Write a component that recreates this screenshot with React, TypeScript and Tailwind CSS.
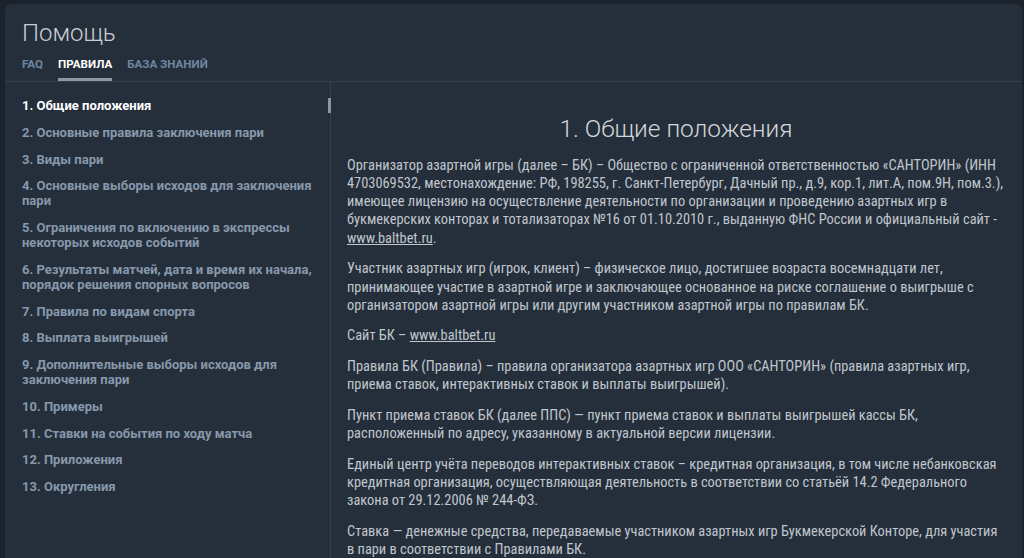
import React from "react";

const navItems = [
  "1. Общие положения",
  "2. Основные правила заключения пари",
  "3. Виды пари",
  "4. Основные выборы исходов для заключения пари",
  "5. Ограничения по включению в экспрессы некоторых исходов событий",
  "6. Результаты матчей, дата и время их начала, порядок решения спорных вопросов",
  "7. Правила по видам спорта",
  "8. Выплата выигрышей",
  "9. Дополнительные выборы исходов для заключения пари",
  "10. Примеры",
  "11. Ставки на события по ходу матча",
  "12. Приложения",
  "13. Округления",
];

export default function App() {
  return (
    <div className="h-[558px] overflow-hidden bg-[#1c222b] pl-[5px] pr-[2px] pt-[4px] font-['Roboto',sans-serif]">
      <div className="h-full rounded-t-[6px] bg-[#252f3b] flex flex-col">
        {/* Header */}
        <div className="border-b border-[#34404d] px-[17px] pt-[15px]">
          <h1 className="text-[24px] leading-[28px] font-light text-[#c9ced4]">Помощь</h1>
          <div className="mt-[11px] flex gap-[15px] text-[11.6px] font-bold uppercase leading-[13px]">
            <span className="pb-[10px] text-[#6e86a2]">FAQ</span>
            <span className="border-b-[3px] border-[#8a97a6] pb-[7px] text-white">Правила</span>
            <span className="pb-[10px] text-[#6e86a2]">База знаний</span>
          </div>
        </div>

        <div className="flex flex-1 min-h-0">
          {/* Nav */}
          <div className="relative w-[326px] shrink-0 border-r border-[#34404d] pl-[17px] pr-[16px] pt-[16px]">
            <ul className="flex flex-col gap-[11.75px]">
              {navItems.map((t, i) => (
                <li
                  key={t}
                  className={`text-[13px] font-bold leading-[15px] ${i === 0 ? "text-white" : "text-[#8798ab]"}`}
                >
                  {t}
                </li>
              ))}
            </ul>
            <div className="absolute right-[-1px] top-[16px] h-[15px] w-[3px] bg-[#8896a8]" />
          </div>

          {/* Content */}
          <div className="flex-1 pl-[16px] pr-[17px] pt-[33px] font-['Roboto_Condensed','Liberation_Sans_Narrow',sans-serif] text-[14.4px] leading-[18.3px] text-[#c0c6cd]">
            <h2 className="mb-[13.5px] text-center font-['Roboto',sans-serif] text-[24.4px] font-light leading-[28px] text-[#d3d7dc]">
              1. Общие положения
            </h2>
            <div className="flex flex-col gap-[12.3px]">
              <p>
                Организатор азартной игры (далее – БК) – Общество с ограниченной ответственностью «САНТОРИН» (ИНН 4703069532, местонахождение: РФ, 198255, г. Санкт-Петербург, Дачный пр., д.9, кор.1, лит.А, пом.9Н, пом.3.), имеющее лицензию на осуществление деятельности по организации и проведению азартных игр в букмекерских конторах и тотализаторах №16 от 01.10.2010 г., выданную ФНС России и официальный сайт -{" "}
                <span className="underline">www.baltbet.ru</span>.
              </p>
              <p>
                Участник азартных игр (игрок, клиент) – физическое лицо, достигшее возраста восемнадцати лет, принимающее участие в азартной игре и заключающее основанное на риске соглашение о выигрыше с организатором азартной игры или другим участником азартной игры по правилам БК.
              </p>
              <p>
                Сайт БК – <span className="underline">www.baltbet.ru</span>
              </p>
              <p>
                Правила БК (Правила) – правила организатора азартных игр ООО «САНТОРИН» (правила азартных игр, приема ставок, интерактивных ставок и выплаты выигрышей).
              </p>
              <p>
                Пункт приема ставок БК (далее ППС) — пункт приема ставок и выплаты выигрышей кассы БК, расположенный по адресу, указанному в актуальной версии лицензии.
              </p>
              <p>
                Единый центр учёта переводов интерактивных ставок – кредитная организация, в том числе небанковская кредитная организация, осуществляющая деятельность в соответствии со статьёй 14.2 Федерального закона от 29.12.2006 № 244-ФЗ.
              </p>
              <p>
                Ставка — денежные средства, передаваемые участником азартных игр Букмекерской Конторе, для участия в пари в соответствии с Правилами БК.
              </p>
            </div>
          </div>
        </div>
      </div>
    </div>
  );
}
